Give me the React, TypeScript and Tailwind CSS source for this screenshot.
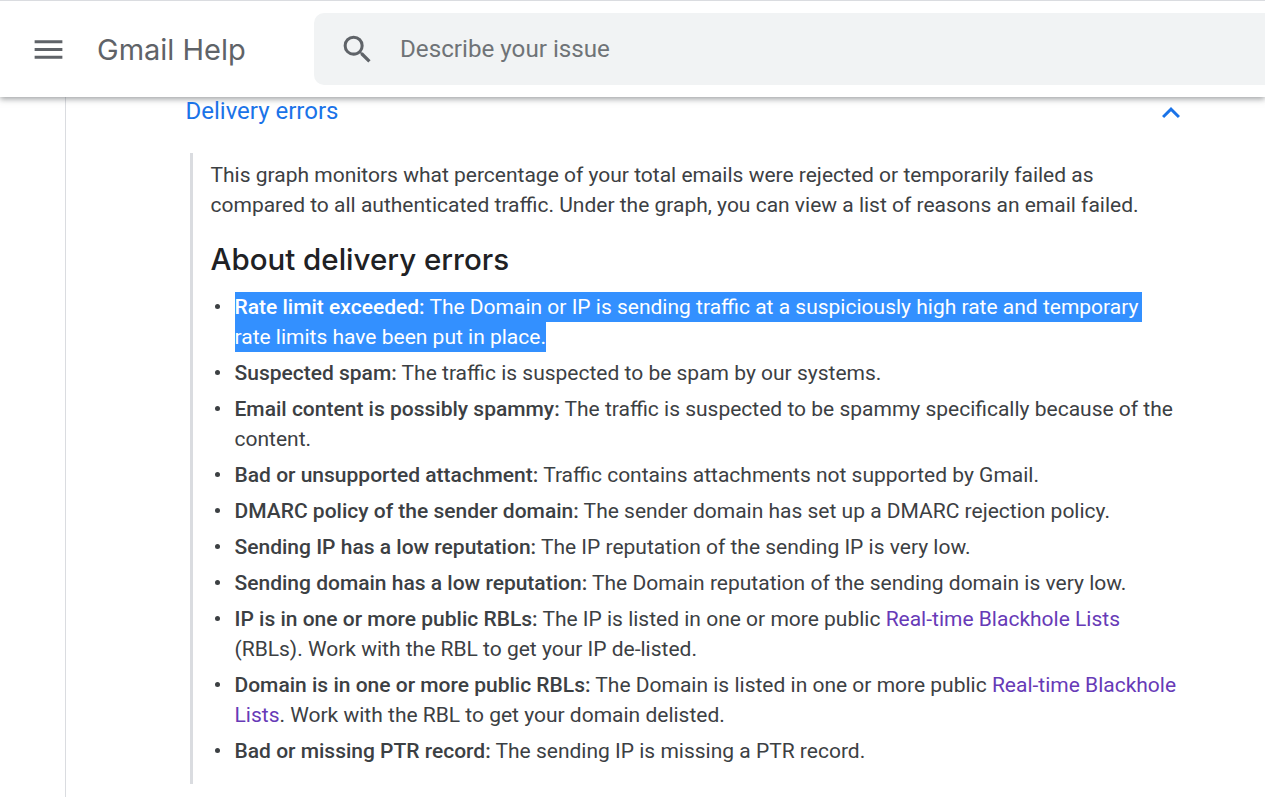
import React from "react";

const Bold = ({ children }: { children: React.ReactNode }) => <strong className="font-medium">{children}</strong>;
const Link = ({ children }: { children: React.ReactNode }) => <span className="text-[#673ab7]">{children}</span>;

const items: React.ReactNode[] = [
  <><Bold>Suspected spam:</Bold> The traffic is suspected to be spam by our systems.</>,
  <><Bold>Email content is possibly spammy:</Bold> The traffic is suspected to be spammy specifically because of the content.</>,
  <><Bold>Bad or unsupported attachment:</Bold> Traffic contains attachments not supported by Gmail.</>,
  <><Bold>DMARC policy of the sender domain:</Bold> The sender domain has set up a DMARC rejection policy.</>,
  <><Bold>Sending IP has a low reputation:</Bold> The IP reputation of the sending IP is very low.</>,
  <><Bold>Sending domain has a low reputation:</Bold> The Domain reputation of the sending domain is very low.</>,
  <><Bold>IP is in one or more public RBLs:</Bold> The IP is listed in one or more public <Link>Real-time Blackhole Lists</Link> (RBLs). Work with the RBL to get your IP de-listed.</>,
  <><Bold>Domain is in one or more public RBLs:</Bold> The Domain is listed in one or more public <Link>Real-time Blackhole Lists</Link>. Work with the RBL to get your domain delisted.</>,
  <><Bold>Bad or missing PTR record:</Bold> The sending IP is missing a PTR record.</>,
];

const bullet = "relative before:absolute before:left-[-20px] before:top-[12px] before:h-[5px] before:w-[5px] before:rounded-full before:bg-[#3c4043]";

export default function App() {
  return (
    <div className="h-[797px] overflow-hidden bg-white font-['Roboto',sans-serif] text-[21px] leading-[30px] text-[#3c4043]">
      <header className="relative z-10 flex h-[97px] items-center border-t border-[#dadce0] bg-white pl-[30px] shadow-[0_2px_6px_rgba(60,64,67,0.5)]">
        <svg viewBox="0 0 24 24" className="mr-[30px] h-[37px] w-[37px] shrink-0 fill-[#5f6368]">
          <path d="M3 18h18v-2H3v2zm0-5h18v-2H3v2zm0-7v2h18V6H3z" />
        </svg>
        <div className="mt-[2px] w-[217px] shrink-0 font-['Inter',sans-serif] text-[29px] text-[#5f6368]">Gmail Help</div>
        <div className="flex h-[72px] flex-1 items-center rounded-l-[10px] bg-[#f1f3f4] pl-[25px]">
          <svg viewBox="0 0 24 24" className="mr-[24px] h-[37px] w-[37px] shrink-0 fill-[#5f6368]">
            <path d="M15.5 14h-.79l-.28-.27A6.471 6.471 0 0 0 16 9.5 6.5 6.5 0 1 0 9.5 16c1.61 0 3.09-.59 4.23-1.57l.27.28v.79l5 4.99L20.49 19l-4.99-5zm-6 0C7.01 14 5 11.99 5 9.5S7.01 5 9.5 5 14 7.01 14 9.5 11.99 14 9.5 14z" />
          </svg>
          <div className="text-[24.2px] text-[#6f7377]">Describe your issue</div>
        </div>
      </header>

      <div className="ml-[65px] h-[702px] border-l border-[#dadce0] pl-[119.5px]">
        <div className="relative z-20 mt-[-2px] flex w-[1003px] items-center justify-between">
          <span className="mb-[4px] text-[24px] text-[#1a73e8]">Delivery errors</span>
          <svg viewBox="0 0 24 24" className="h-[36px] w-[36px] fill-[#1a73e8]">
            <path d="M7.41 15.41 12 10.83l4.59 4.58L18 14l-6-6-6 6z" />
          </svg>
        </div>
        <div className="ml-[4.5px] mt-[22px] w-[990px] border-l-[3px] border-[#dadce0] pb-[18px] pl-[17.5px] pt-[7px]">
          <p>
            This graph monitors what percentage of your total emails were rejected or temporarily failed as compared to all authenticated traffic. Under the graph, you can view a list of reasons an email failed.
          </p>
          <h2 className="mb-[13px] mt-[19px] font-['Inter',sans-serif] text-[29.5px] font-medium leading-[40px] text-[#202124]">About delivery errors</h2>
          <ul className="pl-[24px]">
            <li className={bullet}>
              <span className="bg-[#3390ff] py-[2.7px] pr-[4px] text-white"><Bold>Rate limit exceeded:</Bold> The Domain or IP is sending traffic at a suspiciously high rate and temporary</span>{" "}
              <span className="bg-[#3390ff] py-[2.7px] text-white">rate limits have been put in place.</span>
            </li>
            {items.map((item, i) => (
              <li key={i} className={`mt-[6px] ${bullet}`}>{item}</li>
            ))}
          </ul>
        </div>
      </div>
    </div>
  );
}
